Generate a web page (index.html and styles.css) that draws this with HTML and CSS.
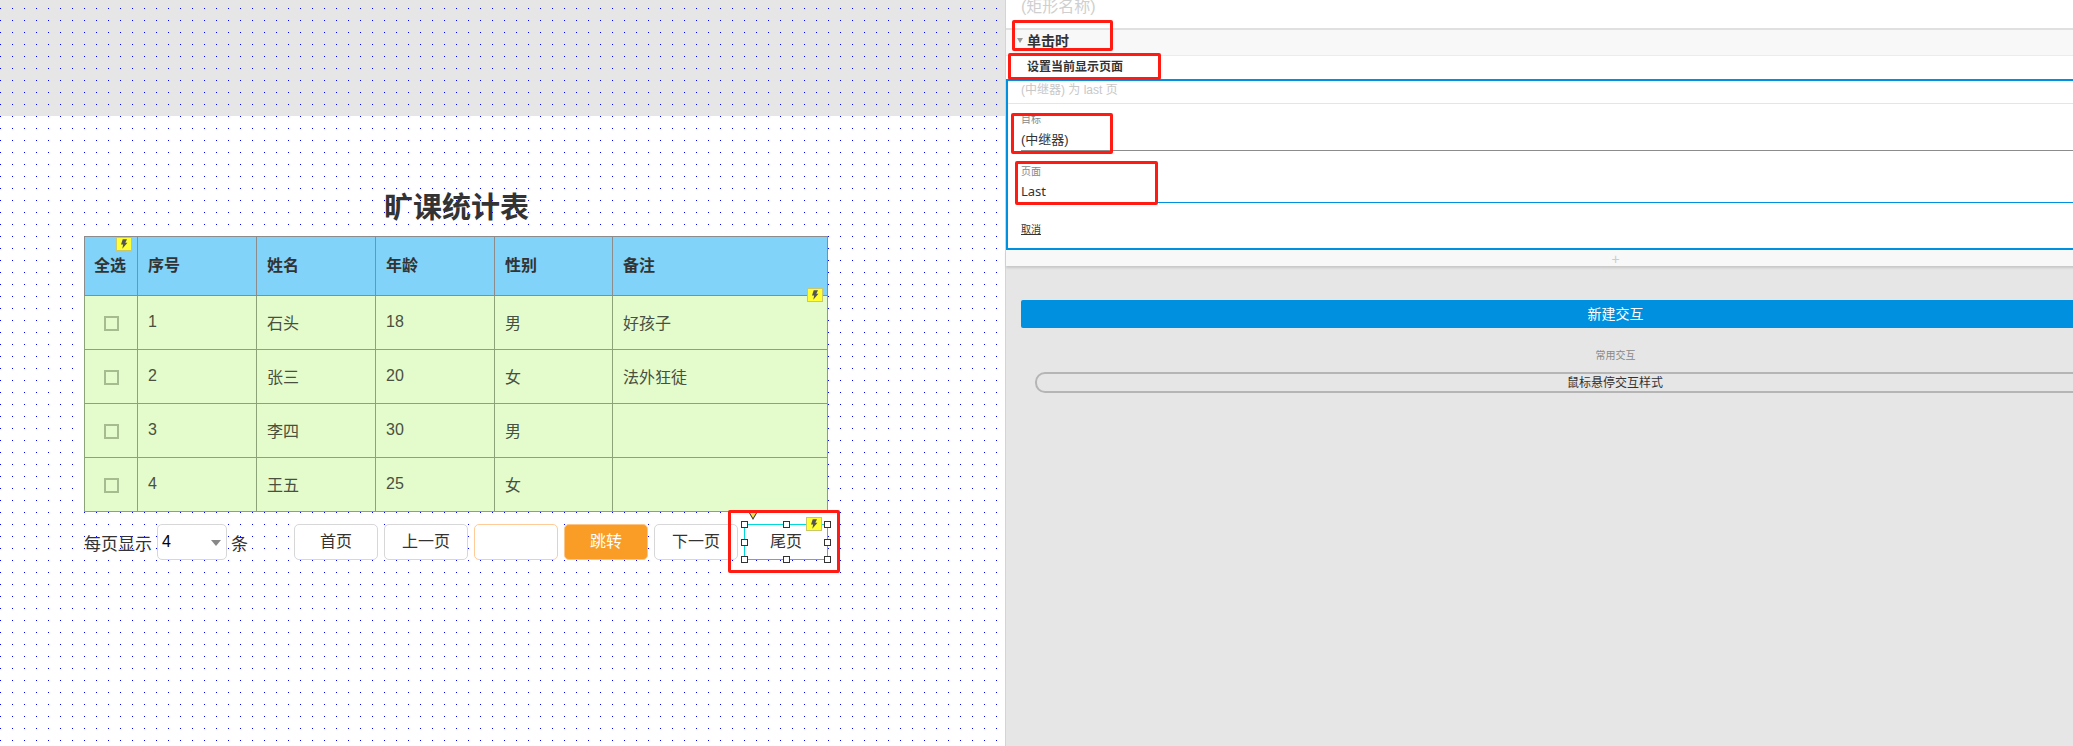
FILE: index.html
```html
<!DOCTYPE html>
<html lang="zh-CN">
<head>
    <meta charset="UTF-8">
    <title>旷课统计表</title>
    <link rel="stylesheet" href="styles.css">
</head>
<body>
<div class="page">

    <!-- canvas -->
    <div class="canvas">
        <div class="band"></div>
        <div class="widget">
            <h1 class="title">旷课统计表</h1>
            <div class="table-wrap">
                <table class="grid">
                    <colgroup>
                        <col class="col-check">
                        <col class="col-normal">
                        <col class="col-normal">
                        <col class="col-normal">
                        <col class="col-short">
                        <col>
                    </colgroup>
                    <thead>
                    <tr>
                        <th class="check-cell">全选</th>
                        <th>序号</th>
                        <th>姓名</th>
                        <th>年龄</th>
                        <th>性别</th>
                        <th>备注</th>
                    </tr>
                    </thead>
                    <tbody>
                    <tr>
                        <td class="check-cell"><span class="check"></span></td>
                        <td>1</td>
                        <td>石头</td>
                        <td>18</td>
                        <td>男</td>
                        <td>好孩子</td>
                    </tr>
                    <tr>
                        <td class="check-cell"><span class="check"></span></td>
                        <td>2</td>
                        <td>张三</td>
                        <td>20</td>
                        <td>女</td>
                        <td>法外狂徒</td>
                    </tr>
                    <tr>
                        <td class="check-cell"><span class="check"></span></td>
                        <td>3</td>
                        <td>李四</td>
                        <td>30</td>
                        <td>男</td>
                        <td></td>
                    </tr>
                    <tr>
                        <td class="check-cell"><span class="check"></span></td>
                        <td>4</td>
                        <td>王五</td>
                        <td>25</td>
                        <td>女</td>
                        <td></td>
                    </tr>
                    </tbody>
                </table>
                <span class="bolt bolt-all"><svg viewBox="0 0 16 14"><path d="M6.500 1.500h5l-2 4h2.500L6 12.500 7 7.500H4.500z"/></svg></span>
                <span class="bolt bolt-row"><svg viewBox="0 0 16 14"><path d="M6.500 1.500h5l-2 4h2.500L6 12.500 7 7.500H4.500z"/></svg></span>
            </div>

            <div class="pager">
                <span class="pager-label">每页显示</span>
                <div class="select">4<span class="caret"></span></div>
                <span class="pager-unit">条</span>
                <div class="pager-btns">
                    <div class="btn">首页</div>
                    <div class="btn">上一页</div>
                    <div class="btn btn-input"></div>
                    <div class="btn btn-go">跳转</div>
                    <div class="btn">下一页</div>
                    <div class="btn btn-selected">尾页
                        <span class="marker"></span>
                        <span class="bolt bolt-last"><svg viewBox="0 0 16 14"><path d="M6.500 1.500h5l-2 4h2.500L6 12.500 7 7.500H4.500z"/></svg></span>
                        <span class="handle h-tl"></span>
                        <span class="handle h-tc"></span>
                        <span class="handle h-tr"></span>
                        <span class="handle h-ml"></span>
                        <span class="handle h-mr"></span>
                        <span class="handle h-bl"></span>
                        <span class="handle h-bc"></span>
                        <span class="handle h-br"></span>
                        <span class="red-box red-last"></span>
                    </div>
                </div>
            </div>
        </div>
    </div>

    <!-- interaction panel -->
    <div class="panel">
        <div class="shape-name">(矩形名称)</div>
        <div class="event-head"><span class="event-arrow"></span>单击时</div>
        <div class="action-name">设置当前显示页面</div>
        <div class="action-box">
            <div class="summary">(中继器) 为 last 页</div>
            <div class="field field-target">
                <div class="field-label">目标</div>
                <div class="field-value">(中继器)</div>
            </div>
            <div class="field field-page">
                <div class="field-label">页面</div>
                <div class="field-value field-last">Last</div>
            </div>
            <div class="cancel"><span class="cancel-link">取消</span></div>
        </div>
        <div class="add-row">+</div>

        <div class="new-btn">新建交互</div>
        <div class="common-title">常用交互</div>
        <div class="hover-btn">鼠标悬停交互样式</div>

        <span class="red-box red-event"></span>
        <span class="red-box red-action"></span>
        <span class="red-box red-target"></span>
        <span class="red-box red-page"></span>
    </div>

</div>
</body>
</html>
```

FILE: styles.css
```css
* {
    box-sizing: border-box;
}
html, body {
    margin: 0;
    padding: 0;
    background: #e6e6e6;
}
body {
    font-family: "Liberation Sans", "Noto Sans CJK SC", sans-serif;
    color: #333;
}
.page {
    display: flex;
    width: 2073px;
    height: 746px;
    overflow: hidden;
}

/* canvas */
.canvas {
    flex: none;
    width: 1005px;
    background-color: #fff;
    background-image: conic-gradient(at 1px 1px, transparent 75%, #00f 0);
    background-size: 12px 12px;
    background-position: 0 8px;
}
.band {
    height: 116px;
    background-color: #e6e6e6;
    background-image: conic-gradient(at 1px 1px, transparent 75%, #00f 0);
    background-size: 12px 12px;
    background-position: 0 8px;
}
.widget {
    width: 745px;
    margin-left: 84px;
}
.title {
    height: 120px;
    margin: 0;
    padding-top: 72px;
    font-size: 29px;
    line-height: 40px;
    text-align: center;
    font-weight: 700;
}
.table-wrap {
    position: relative;
}
.grid {
    width: 744px;
    table-layout: fixed;
    border-collapse: collapse;
    font-size: 16px;
}
.col-check {
    width: 53px;
}
.col-normal {
    width: 119px;
}
.col-short {
    width: 118px;
}
.grid th, .grid td {
    padding: 0 0 0 10px;
    text-align: left;
}
.grid th {
    height: 59px;
    padding-bottom: 4px;
    background: #81d3f9;
    border: 1px solid #8c8c8c;
    font-weight: 700;
}
.grid td {
    height: 54px;
    padding-bottom: 1px;
    background: #e4fccc;
    border: 1px solid #8ba376;
    color: #4a5040;
}
.grid th.check-cell {
    padding: 0 2px 4px 0;
    text-align: center;
}
.grid td.check-cell {
    padding: 0;
    text-align: center;
}
.check {
    display: inline-block;
    width: 15px;
    height: 15px;
    border: 2px solid #a6bb90;
    vertical-align: middle;
}
.bolt {
    position: absolute;
    width: 16px;
    height: 14px;
    background: #ffff33;
    border: 1px solid #c9c96b;
}
.bolt svg {
    display: block;
    width: 100%;
    height: 100%;
}
.bolt path {
    fill: #555;
}
.bolt-all {
    left: 32px;
    top: 1px;
}
.bolt-row {
    left: 723px;
    top: 52px;
}
.bolt-last {
    right: 5px;
    top: -8px;
}

/* pager */
.pager {
    display: flex;
    align-items: center;
    margin-top: 12px;
    height: 36px;
    font-size: 16px;
}
.pager-label {
    width: 73px;
    font-size: 17px;
    white-space: nowrap;
}
.select {
    position: relative;
    width: 70px;
    height: 36px;
    padding-left: 4px;
    background: #fff;
    border: 1px solid #d7d7d7;
    border-radius: 5px;
    color: #000;
    line-height: 34px;
}
.caret {
    position: absolute;
    right: 5px;
    top: 15px;
    border-left: 5px solid transparent;
    border-right: 5px solid transparent;
    border-top: 6px solid #888;
}
.pager-unit {
    width: 67px;
    padding-left: 4px;
    font-size: 17px;
}
.pager-btns {
    display: flex;
    gap: 6px;
}
.btn {
    position: relative;
    width: 84px;
    height: 36px;
    background: #fff;
    border: 1px solid #d7d7d7;
    border-radius: 5px;
    text-align: center;
    line-height: 34px;
}
.btn-input {
    border-color: #ffcc99;
}
.btn-go {
    background: #f99d26;
    border-color: #fcc586;
    color: #fff;
}
.btn-selected {
    border: 1px solid #00d9d9;
    border-radius: 0;
}
.handle {
    position: absolute;
    width: 7px;
    height: 7px;
    background: #fff;
    border: 1px solid #333;
}
.h-tl { left: -4px; top: -4px; }
.h-tc { left: 38px; top: -4px; }
.h-tr { right: -4px; top: -4px; }
.h-ml { left: -4px; top: 14px; }
.h-mr { right: -4px; top: 14px; }
.h-bl { left: -4px; bottom: -4px; }
.h-bc { left: 38px; bottom: -4px; }
.h-br { right: -4px; bottom: -4px; }
.marker {
    position: absolute;
    left: 4px;
    top: -12px;
    width: 0;
    height: 0;
    border-left: 4px solid transparent;
    border-right: 4px solid transparent;
    border-top: 7px solid #333;
}
.marker::after {
    content: "";
    position: absolute;
    left: -3px;
    top: -7px;
    border-left: 3px solid transparent;
    border-right: 3px solid transparent;
    border-top: 5px solid #ffe14d;
}

/* red annotation frames */
.red-box {
    position: absolute;
    border: 3px solid #ff1a12;
    border-radius: 2px;
    pointer-events: none;
}
.red-last {
    left: -17px;
    top: -15px;
    width: 112px;
    height: 63px;
}
.red-event {
    left: 6px;
    top: 20px;
    width: 101px;
    height: 31px;
}
.red-action {
    left: 2px;
    top: 53px;
    width: 153px;
    height: 27px;
}
.red-target {
    left: 5px;
    top: 113px;
    width: 102px;
    height: 41px;
}
.red-page {
    left: 9px;
    top: 161px;
    width: 143px;
    height: 44px;
}

/* panel */
.panel {
    position: relative;
    flex: none;
    width: 1220px;
    border-left: 1px solid #d4d4d4;
    background: #e6e6e6;
}
.shape-name {
    height: 28px;
    padding-left: 15px;
    background: #fff;
    color: #cfcfcf;
    font-size: 16px;
    line-height: 14px;
}
.event-head {
    display: flex;
    align-items: center;
    height: 28px;
    padding: 0 0 4px 11px;
    background: #f8f8f8;
    border-top: 2px solid #e0e0e0;
    border-bottom: 1px solid #ececec;
    font-size: 14px;
    font-weight: 700;
    line-height: 20px;
}
.event-arrow {
    width: 0;
    height: 0;
    margin-right: 4px;
    border-left: 3px solid transparent;
    border-right: 3px solid transparent;
    border-top: 5px solid #999;
}
.action-name {
    height: 23px;
    padding-left: 21px;
    background: #fff;
    font-size: 12px;
    font-weight: 700;
    line-height: 23px;
}
.action-box {
    height: 171px;
    background: #fff;
    border: 2px solid #0090e0;
    border-right: 0;
}
.summary {
    height: 23px;
    padding-left: 13px;
    border-bottom: 1px solid #e5e5e5;
    color: #c8c8c8;
    font-size: 12px;
    line-height: 18px;
}
.field {
    margin-left: 13px;
}
.field-target {
    height: 47px;
    padding-top: 9px;
    border-bottom: 1px solid #8c8c8c;
}
.field-page {
    height: 52px;
    padding-top: 14px;
    border-bottom: 1px solid #0090e0;
}
.field-label {
    color: #888;
    font-size: 10px;
    line-height: 14px;
}
.field-value {
    margin-top: 4px;
    font-size: 13px;
    line-height: 18px;
}
.field-last {
    margin-top: 3px;
    font-family: "Noto Sans", "Noto Sans CJK SC", sans-serif;
}
.cancel {
    padding: 20px 0 0 13px;
    font-size: 10px;
    line-height: 14px;
}
.cancel-link {
    text-decoration: underline;
}
.add-row {
    height: 16px;
    background: #f8f8f8;
    box-shadow: 0 2px 2px #c8c8c8;
    color: #ccc;
    font-size: 14px;
    line-height: 18px;
    text-align: center;
}
.new-btn {
    height: 28px;
    margin: 34px 15px 0;
    background: #0090e0;
    border-radius: 2px;
    color: #fff;
    font-size: 14px;
    line-height: 28px;
    text-align: center;
}
.common-title {
    margin-top: 21px;
    color: #888;
    font-size: 10px;
    line-height: 14px;
    text-align: center;
}
.hover-btn {
    height: 21px;
    margin: 9px 30px 0 29px;
    border: 2px solid #b5b5b5;
    border-radius: 10px;
    font-size: 12px;
    line-height: 18px;
    text-align: center;
}
```
